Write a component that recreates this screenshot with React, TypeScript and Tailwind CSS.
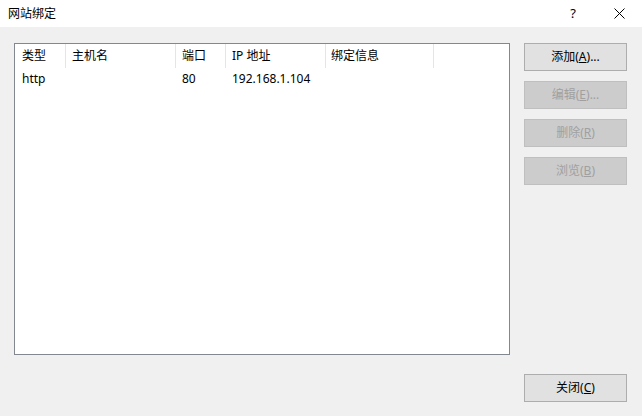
import React from "react";

const font = { fontFamily: '"Noto Sans", "Noto Sans CJK SC", sans-serif' };

function Btn({ label, k, rest, disabled }: { label: string; k: string; rest?: string; disabled?: boolean }) {
  return (
    <div
      className={
        "w-[103px] h-[28px] flex items-center justify-center border text-[12px] " +
        (disabled
          ? "bg-[#cccccc] border-[#bfbfbf] text-[#a0a0a0]"
          : "bg-[#e1e1e1] border-[#adadad] text-black")
      }
    >
      <span>
        {label}(<span className="underline">{k}</span>){rest}
      </span>
    </div>
  );
}

const cols = [
  { w: "w-[51px]", pl: "pl-[7px]", h: "类型", d: "http" },
  { w: "w-[110px]", pl: "pl-[6px]", h: "主机名", d: "" },
  { w: "w-[50px]", pl: "pl-[6px]", h: "端口", d: "80" },
  { w: "w-[100px]", pl: "pl-[6px]", h: "IP 地址", d: "192.168.1.104" },
  { w: "w-[108px]", pl: "pl-[5px]", h: "绑定信息", d: "" },
];

export default function App() {
  return (
    <div className="w-[642px] h-[416px] bg-[#f0f0f0] flex flex-col text-black" style={font}>
      <div className="h-[27px] bg-white flex items-center shrink-0">
        <span className="pl-[8px] text-[12px] flex-1">网站绑定</span>
        <span className="w-[46px] text-center text-[13px] mr-[0px]">?</span>
        <div className="w-[46px] flex items-center justify-center">
          <svg width="11" height="11" viewBox="0 0 11 11">
            <path d="M0.5 0.5 L10.5 10.5 M10.5 0.5 L0.5 10.5" stroke="#000" strokeWidth="1" fill="none" />
          </svg>
        </div>
      </div>
      <div className="flex-1 flex pl-[14px] pt-[16px] pb-[14px]">
        <div className="w-[496px] h-[312px] border border-[#828790] bg-white text-[12px]">
          <div className="flex h-[24px]">
            {cols.map((c) => (
              <div key={c.h} className={c.w + " " + c.pl + " h-full border-r border-[#e5e5e5] flex items-center"}>
                {c.h}
              </div>
            ))}
          </div>
          <div className="flex h-[22px]">
            {cols.map((c) => (
              <div key={c.h} className={c.w + " " + c.pl + " h-full flex items-center"}>
                {c.d}
              </div>
            ))}
          </div>
        </div>
        <div className="ml-[14px] flex flex-col justify-between">
          <div className="flex flex-col gap-[10px]">
            <Btn label="添加" k="A" rest="..." />
            <Btn label="编辑" k="E" rest="..." disabled />
            <Btn label="删除" k="R" disabled />
            <Btn label="浏览" k="B" disabled />
          </div>
          <Btn label="关闭" k="C" />
        </div>
      </div>
    </div>
  );
}
